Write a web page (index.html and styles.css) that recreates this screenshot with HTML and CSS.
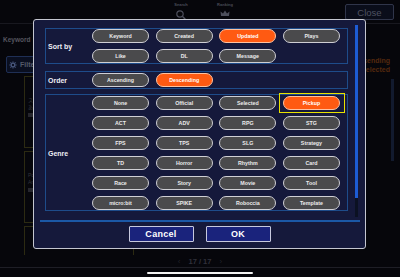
FILE: index.html
```html
<!DOCTYPE html>
<html lang="en">
<head>
<meta charset="UTF-8">
<meta name="viewport" content="width=device-width, initial-scale=1.0">
<title>Filter</title>
<link rel="stylesheet" href="styles.css">
</head>
<body>
<div class="page">
    <header class="topbar">
        <div class="tab">
            <span class="tab-label">Search</span>
            <svg width="10" height="10" viewBox="0 0 10 10"><circle cx="4" cy="4" r="3.2" fill="none" stroke="#4d4f5c" stroke-width="1.2"/><line x1="6.3" y1="6.3" x2="9.3" y2="9.3" stroke="#4d4f5c" stroke-width="1.4"/></svg>
        </div>
        <div class="tab">
            <span class="tab-label">Ranking</span>
            <svg width="10" height="7" viewBox="0 0 10 7"><path d="M1 6 L0.5 1.5 L3 3.5 L5 0.5 L7 3.5 L9.5 1.5 L9 6 Z" fill="#4d4f5c"/></svg>
        </div>
        <button class="close">Close</button>
    </header>

    <div class="content">
        <aside class="side">
            <div class="kw">Keyword</div>
            <div class="filter">
                <svg width="8" height="8" viewBox="0 0 10 10"><circle cx="5" cy="5" r="2.2" fill="none" stroke="#4a5a80" stroke-width="1.4"/><path d="M5 0.5v2M5 7.5v2M0.5 5h2M7.5 5h2M1.8 1.8l1.4 1.4M6.8 6.8l1.4 1.4M1.8 8.2l1.4-1.4M6.8 3.2l1.4-1.4" stroke="#4a5a80" stroke-width="1.3"/></svg>
                <span>Filter</span>
            </div>
            <div class="card">
                <span class="card-t">ス</span>
                <span class="card-t">あ</span>
                <span class="card-bar"></span>
            </div>
            <div class="card">
                <span class="card-t">Po</span>
                <span class="card-t">An</span>
                <span class="card-bar"></span>
            </div>
            <div class="card"></div>
        </aside>
        <div class="right">
            <div class="sort-info">Ascending<br>Selected</div>
            <div class="side-scroll"></div>
        </div>
    </div>

    <footer class="pager">
        <span class="arrow">‹</span>
        <span class="count">17 / 17</span>
        <span class="arrow">›</span>
    </footer>
    <div class="home"><div class="home-bar"></div></div>
</div>

<div class="modal">
    <div class="modal-body">
        <div class="sections">
            <div class="section sort">
                <div class="sec-label">Sort by</div>
                <div class="opts">
                    <button class="opt">Keyword</button>
                    <button class="opt">Created</button>
                    <button class="opt on">Updated</button>
                    <button class="opt">Plays</button>
                    <button class="opt">Like</button>
                    <button class="opt">DL</button>
                    <button class="opt">Message</button>
                </div>
            </div>
            <div class="section order">
                <div class="sec-label">Order</div>
                <div class="opts">
                    <button class="opt">Ascending</button>
                    <button class="opt on">Descending</button>
                </div>
            </div>
            <div class="section genre">
                <div class="sec-label">Genre</div>
                <div class="opts">
                    <button class="opt">None</button>
                    <button class="opt">Official</button>
                    <button class="opt">Selected</button>
                    <button class="opt on focus">Pickup</button>
                    <button class="opt">ACT</button>
                    <button class="opt">ADV</button>
                    <button class="opt">RPG</button>
                    <button class="opt">STG</button>
                    <button class="opt">FPS</button>
                    <button class="opt">TPS</button>
                    <button class="opt">SLG</button>
                    <button class="opt">Strategy</button>
                    <button class="opt">TD</button>
                    <button class="opt">Horror</button>
                    <button class="opt">Rhythm</button>
                    <button class="opt">Card</button>
                    <button class="opt">Race</button>
                    <button class="opt">Story</button>
                    <button class="opt">Movie</button>
                    <button class="opt">Tool</button>
                    <button class="opt">micro:bit</button>
                    <button class="opt">SPIKE</button>
                    <button class="opt">Roboccia</button>
                    <button class="opt">Template</button>
                </div>
            </div>
        </div>
        <div class="scrollbar"><div class="thumb"></div></div>
    </div>
    <div class="divider"></div>
    <div class="actions">
        <button class="act">Cancel</button>
        <button class="act">OK</button>
    </div>
</div>
</body>
</html>
```

FILE: styles.css
```css
* {
    box-sizing: border-box;
}

body {
    margin: 0;
    width: 400px;
    height: 277px;
    overflow: hidden;
    position: relative;
    background-color: #06060b;
    font-family: "Liberation Sans", Arial, sans-serif;
}

/* page behind the dialog */
.page {
    height: 277px;
    display: flex;
    flex-direction: column;
}

.topbar {
    height: 24px;
    flex: none;
    display: flex;
    align-items: flex-start;
    gap: 14px;
    padding-left: 166px;
    border-bottom: 1px solid #18181f;
}

.tab {
    width: 30px;
    display: flex;
    flex-direction: column;
    align-items: center;
    padding-top: 2px;
    color: #4a4c58;
}

.tab-label {
    font-size: 4px;
    font-weight: bold;
    line-height: 5px;
}

.tab svg {
    margin-top: 3px;
}

.close {
    margin-left: auto;
    margin-right: 6px;
    margin-top: 4px;
    width: 49px;
    height: 16px;
    padding: 0;
    border: 1px solid #30354a;
    border-radius: 2px;
    background-color: #0a0d1a;
    color: #4e5262;
    font-family: "Liberation Sans", Arial, sans-serif;
    font-size: 9.5px;
}

.content {
    flex: 1;
    display: flex;
    overflow: hidden;
}

.side {
    width: 150px;
    padding-left: 3px;
}

.kw {
    margin-top: 12px;
    font-size: 6.5px;
    font-weight: bold;
    line-height: 7px;
    color: #55555f;
}

.filter {
    margin-top: 13px;
    margin-left: 3px;
    width: 60px;
    height: 17px;
    display: flex;
    align-items: center;
    gap: 3px;
    padding-left: 2px;
    border: 1px solid #1f2f55;
    border-radius: 2px;
    background-color: #0a0f20;
    color: #555a6a;
    font-size: 7px;
    font-weight: bold;
}

.card {
    margin-left: 21px;
    margin-top: 3px;
    width: 110px;
    height: 72px;
    border: 1px solid #2c2a12;
    padding: 20px 0 0 3px;
    display: flex;
    flex-direction: column;
    gap: 1px;
}

.card-t {
    font-size: 5px;
    line-height: 6px;
    color: #34343a;
    font-family: "Liberation Sans", "Noto Sans CJK JP", sans-serif;
}

.card-bar {
    width: 5px;
    height: 4px;
    margin-top: 2px;
    background-color: #26262d;
}

.right {
    margin-left: auto;
    width: 60px;
    display: flex;
    flex-direction: column;
}

.sort-info {
    margin-top: 32px;
    padding-right: 10px;
    text-align: right;
    font-size: 7px;
    font-weight: bold;
    line-height: 9px;
    color: #55290e;
}

.side-scroll {
    margin-top: 5px;
    margin-left: auto;
    margin-right: 6px;
    width: 3px;
    height: 82px;
    background-color: #121a2e;
}

.pager {
    height: 13px;
    flex: none;
    display: flex;
    align-items: center;
    justify-content: center;
    gap: 8px;
    border-bottom: 1px solid #1e1e26;
}

.count {
    font-size: 7.5px;
    font-weight: bold;
    color: #30303a;
}

.arrow {
    font-size: 8px;
    color: #22222a;
}

.home {
    height: 9px;
    flex: none;
    display: flex;
    justify-content: center;
}

.home-bar {
    margin-top: 4px;
    width: 106px;
    height: 2px;
    border-radius: 1px;
    background-color: #f2f2f2;
}

/* filter dialog */
.modal {
    position: absolute;
    left: 33px;
    top: 19px;
    width: 333px;
    height: 230px;
    padding: 5px 0 6px 0;
    border: 1px solid #c4c6d0;
    border-radius: 3px;
    background-color: #15193b;
}

.modal-body {
    height: 192px;
    display: flex;
    padding-left: 11px;
}

.sections {
    width: 303px;
    padding-top: 3px;
}

.section {
    display: flex;
    border: 1px solid #1e4c8a;
    padding-right: 7px;
}

.section.order {
    margin-top: 7px;
    padding-top: 1px;
    padding-bottom: 1px;
}

.section.genre {
    margin-top: 5px;
    padding-top: 1px;
}

.sec-label {
    width: 46px;
    flex: none;
    align-self: center;
    padding-left: 2px;
    font-size: 7px;
    font-weight: bold;
    color: #eeeef4;
}

.opts {
    display: grid;
    grid-template-columns: repeat(4, 57px);
    column-gap: 6.67px;
    row-gap: 6px;
}

.opt {
    position: relative;
    height: 14px;
    padding: 0;
    border: 1px solid #cfcfd4;
    border-radius: 7px;
    background-color: #4a4a4c;
    color: #ececec;
    font-family: "Liberation Sans", Arial, sans-serif;
    font-size: 5.3px;
    font-weight: bold;
}

.opt.on {
    background-color: #ff5a12;
    border-color: #ffc2a0;
    color: #fff;
}

/* square yellow focus frame around the current item */
.opt.focus::after {
    content: "";
    position: absolute;
    top: -4px;
    bottom: -4px;
    left: -5px;
    right: -6px;
    border: 1.5px solid #e8e200;
}

.scrollbar {
    margin-left: 7px;
    width: 3px;
    height: 100%;
    background-color: #0b1122;
}

.thumb {
    height: 173px;
    background-color: #1d5cd4;
}

.divider {
    margin: 3px 0 0 6px;
    width: 320px;
    height: 2px;
    background-color: #1b58a6;
}

.actions {
    display: flex;
    justify-content: center;
    gap: 12px;
    margin-top: 4px;
}

.act {
    width: 65px;
    height: 16px;
    padding: 0;
    border: 1px solid #c6c9de;
    border-radius: 1px;
    background-color: #1a237c;
    color: #fff;
    font-family: "Liberation Sans", Arial, sans-serif;
    font-size: 9px;
    font-weight: bold;
    letter-spacing: 0.3px;
}
```
